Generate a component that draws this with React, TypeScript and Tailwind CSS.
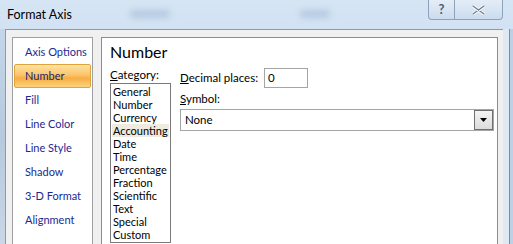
import React from "react";

const navItems = ["Axis Options", "Number", "Fill", "Line Color", "Line Style", "Shadow", "3-D Format", "Alignment"];
const cats = ["General", "Number", "Currency", "Accounting", "Date", "Time", "Percentage", "Fraction", "Scientific", "Text", "Special", "Custom"];

export default function App() {
  return (
    <div
      className="w-[513px] h-[244px] overflow-hidden flex flex-col whitespace-nowrap bg-[linear-gradient(180deg,#d6e5f4_0%,#c8dbef_40%,#bfd4ea_100%)]"
      style={{ fontFamily: 'Lato, "Liberation Sans", sans-serif' }}
    >
      {/* title bar */}
      <div className="h-[29px] flex items-start relative shrink-0">
        <div className="pl-[7px] pt-[7px] text-[12.5px] text-black leading-[16px]">Format Axis</div>
        <div className="absolute left-[130px] top-[10px] w-[40px] h-[8px] rounded-full bg-[#b4c9e0] blur-[3px]" />
        <div className="absolute left-[300px] top-[10px] w-[30px] h-[8px] rounded-full bg-[#b4c9e0] blur-[3px]" />
        <div className="ml-auto mr-[10px] flex h-[20px]">
          <div className="w-[27px] h-[20px] border border-t-0 border-[#8ea3bb] rounded-bl-[4px] bg-[linear-gradient(180deg,#e4edf7,#cbdcee)] flex items-center justify-center text-[13px] font-bold text-[#4d5d70] leading-none">
            ?
          </div>
          <div className="w-[48px] h-[20px] border border-t-0 border-l-0 border-[#8ea3bb] rounded-br-[4px] bg-[linear-gradient(180deg,#e4edf7,#cbdcee)] flex items-center justify-center">
            <svg width="13" height="10" viewBox="0 0 13 10">
              <path d="M1 1 L12 9 M12 1 L1 9" stroke="#f4f7fb" strokeWidth="3.4" strokeLinecap="round" />
              <path d="M1 1 L12 9 M12 1 L1 9" stroke="#6f7f92" strokeWidth="1.2" strokeLinecap="round" />
            </svg>
          </div>
        </div>
      </div>
      {/* body */}
      <div className="flex flex-1 min-h-0">
        <div className="w-[5px] shrink-0 bg-[linear-gradient(180deg,#c4d6ea,#b7c9dd_50%,#c9d7e6)]" />
        <div className="flex-1 bg-[#f0f0f0] border-t border-l border-[#8a9bb0] flex pt-[7px] pl-[6px] pr-[5px] gap-[8px]">
          {/* left nav */}
          <div className="w-[81px] h-[220px] bg-white border border-[#a0a0a0] flex flex-col pt-[2px] px-[1px] shrink-0">
            {navItems.map((n, i) =>
              i === 1 ? (
                <div
                  key={n}
                  className="h-[24px] flex items-center pl-[10px] text-[11px] text-[#1c1c6e] rounded-[2px] border border-[#e3a33b] bg-[linear-gradient(180deg,#fde3a4_0%,#fcc46a_45%,#f8ad45_60%,#fcd47c_100%)]"
                >
                  {n}
                </div>
              ) : (
                <div key={n} className="h-[24px] flex items-center pl-[11px] text-[11px] text-[#1a2a92]">
                  {n}
                </div>
              )
            )}
          </div>
          {/* right panel */}
          <div className="w-[397px] h-[220px] bg-white border border-[#8c8c8c] flex flex-col pl-[8px] pt-[4px] shrink-0">
            <div className="text-[16px] leading-[20px] text-black">Number</div>
            <div className="flex gap-[9px] mt-[6px]">
              <div className="flex flex-col">
                <div className="text-[11.5px] leading-[14px] text-black">
                  <span className="underline">C</span>ategory:
                </div>
                <div className="mt-[1px] w-[61px] h-[160px] border border-[#7a7a7a] flex flex-col pt-[1px] px-[1px]">
                  {cats.map((c) => (
                    <div
                      key={c}
                      className={
                        "h-[13px] leading-[13px] text-[11px] text-black pl-[1px] " + (c === "Accounting" ? "bg-[#efebde]" : "")
                      }
                    >
                      {c}
                    </div>
                  ))}
                </div>
              </div>
              <div className="flex flex-col">
                <div className="flex items-center h-[20px]">
                  <div className="text-[11.5px] text-black w-[84px]">
                    <span className="underline">D</span>ecimal places:
                  </div>
                  <div className="w-[44px] h-[20px] border border-[#a5a5a5] bg-white text-[11.5px] text-black pl-[3px] leading-[18px]">0</div>
                </div>
                <div className="text-[11.5px] text-black mt-[3px] leading-[16px]">
                  <span className="underline">S</span>ymbol:
                </div>
                <div className="mt-[2px] w-[314px] h-[22px] border border-[#a5a5a5] bg-white flex items-center">
                  <div className="flex-1 pl-[4px] text-[11.5px] text-black">None</div>
                  <div className="w-[19px] h-[20px] border border-[#707070] bg-[linear-gradient(180deg,#f4f4f4,#dcdcdc)] flex items-center justify-center">
                    <svg width="7" height="4" viewBox="0 0 7 4">
                      <path d="M0 0 H7 L3.5 4 Z" fill="#000" />
                    </svg>
                  </div>
                </div>
              </div>
            </div>
          </div>
        </div>
        <div className="w-[10px] shrink-0 flex">
          <div className="w-[6px] bg-[#dfe9f4]" />
          <div className="w-[1px] bg-[#6d8fb8]" />
          <div className="w-[3px] bg-[#bcd0e6]" />
        </div>
      </div>
    </div>
  );
}
